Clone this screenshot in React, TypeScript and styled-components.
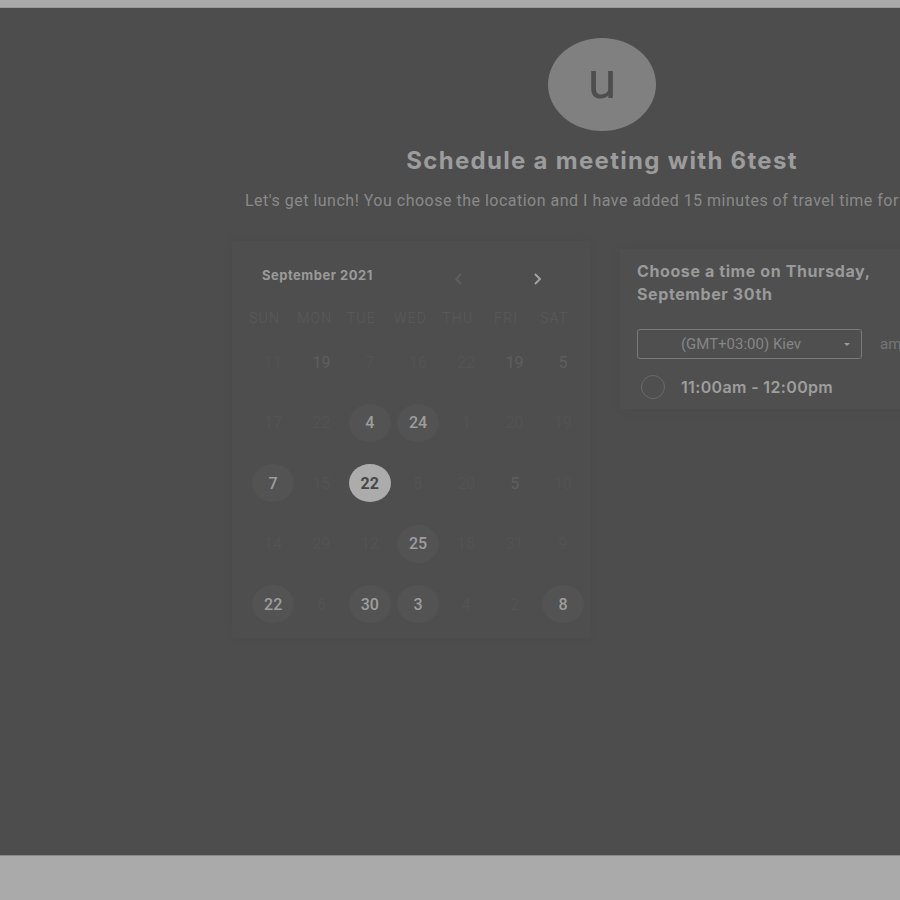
import React from "react";
import styled, { createGlobalStyle } from "styled-components";

const Global = createGlobalStyle`
  html, body { margin: 0; padding: 0; background: #aaaaaa; overflow: hidden; }
  body { font-family: Roboto, "Liberation Sans", sans-serif; }
  * { box-sizing: border-box; }
`;

const TopBand = styled.div`
  height: 8px;
  background: #aaaaaa;
  border-bottom: 1px solid #9a9a9a;
`;

const Main = styled.main`
  height: 848px;
  background: #4d4d4d;
  border-bottom: 1px solid #8a8a8a;
  overflow: hidden;
`;

const Content = styled.div`
  margin-left: 232px;
  width: 740px;
  display: flex;
  flex-direction: column;
  align-items: center;
`;

const Avatar = styled.div`
  margin-top: 30px;
  width: 108px;
  height: 93px;
  border-radius: 50%;
  background: #808080;
  display: flex;
  align-items: center;
  justify-content: center;
  color: #4e4e4e;
  font-family: Roboto, sans-serif;
  font-size: 52px;
  line-height: 1;
  padding-bottom: 8px;
`;

const Title = styled.h1`
  margin: 15px 0 0;
  font-family: Inter, "Liberation Sans", sans-serif;
  font-weight: 700;
  font-size: 24px;
  line-height: 30px;
  color: #9c9c9c;
  letter-spacing: 1.3px;
`;

const Subtitle = styled.p`
  align-self: flex-start;
  margin: 15px 0 0 13px;
  font-family: Roboto, sans-serif;
  font-size: 16px;
  line-height: 20px;
  letter-spacing: 0.5px;
  color: #8a8a8a;
  white-space: nowrap;
`;

const Cards = styled.div`
  margin-top: 30px;
  align-self: stretch;
  display: flex;
  align-items: flex-start;
  gap: 30px;
`;

const CalendarCard = styled.section`
  width: 358px;
  padding: 24px 3px 3px 17px;
  background: #4e4e4e;
  box-shadow: 0 0 12px rgba(0, 0, 0, 0.04);
`;

const CalHeader = styled.div`
  display: flex;
  align-items: center;
  height: 20px;
  padding-left: 13px;
`;

const Month = styled.div`
  font-family: Inter, "Liberation Sans", sans-serif;
  font-weight: 700;
  font-size: 13px;
  letter-spacing: 0.5px;
  color: #9a9a9a;
  flex: 1;
`;

const Nav = styled.div`
  display: flex;
  gap: 59px;
  margin-right: 40px;
  margin-top: 7px;
`;

const NavButton = styled.button<{ $active?: boolean }>`
  width: 20px;
  height: 14px;
  padding: 0;
  border: 0;
  background: none;
  display: flex;
  align-items: center;
  justify-content: center;
  color: ${(p) => (p.$active ? "#a2a2a2" : "#5e5e5e")};
`;

const Weekdays = styled.div`
  margin-top: 21px;
  display: grid;
  grid-template-columns: repeat(7, 48.3px);
  height: 24px;
  align-items: center;
`;

const Weekday = styled.div`
  text-align: center;
  padding-right: 17px;
  font-family: Roboto, sans-serif;
  font-size: 14px;
  font-weight: 300;
  letter-spacing: 1.2px;
  color: #5a5a5a;
  white-space: nowrap;
`;

const Days = styled.div`
  margin-top: 2px;
  display: grid;
  grid-template-columns: repeat(7, 48.3px);
  grid-auto-rows: 60.5px;
  align-items: center;
  justify-items: center;
`;

type Kind = "faint" | "dim" | "open" | "selected";

const Day = styled.div<{ $kind: Kind }>`
  width: 42px;
  height: 38px;
  border-radius: 50%;
  display: flex;
  align-items: center;
  justify-content: center;
  font-family: Roboto, sans-serif;
  font-size: 16px;
  font-weight: ${(p) => (p.$kind === "selected" ? 700 : p.$kind === "open" ? 500 : 400)};
  background: ${(p) =>
    p.$kind === "selected" ? "#acacac" : p.$kind === "open" ? "#535353" : "transparent"};
  color: ${(p) =>
    p.$kind === "selected"
      ? "#474747"
      : p.$kind === "open"
      ? "#9e9e9e"
      : p.$kind === "dim"
      ? "#5e5e5e"
      : "#535353"};
`;

const TimeCard = styled.section`
  flex: 1;
  margin-top: 8px;
  padding: 11px 17px 10px;
  background: #4f4f4f;
  box-shadow: 0 0 12px rgba(0, 0, 0, 0.05);
`;

const TimeTitle = styled.h2`
  margin: 0;
  font-family: Inter, "Liberation Sans", sans-serif;
  font-weight: 700;
  font-size: 16px;
  line-height: 23px;
  letter-spacing: 0.6px;
  color: #9a9a9a;
`;

const ZoneRow = styled.div`
  margin-top: 23px;
  display: flex;
  align-items: center;
  gap: 18px;
`;

const Select = styled.div`
  width: 225px;
  height: 30px;
  border: 1px solid #7a7a7a;
  border-radius: 3px;
  display: flex;
  align-items: center;
  padding: 0 11px 0 0;
`;

const SelectText = styled.span`
  flex: 1;
  text-align: center;
  font-family: Roboto, sans-serif;
  font-size: 15px;
  color: #868686;
`;

const Caret = styled.span`
  width: 0;
  height: 0;
  border-left: 3px solid transparent;
  border-right: 3px solid transparent;
  border-top: 3px solid #9a9a9a;
`;

const Toggle = styled.span`
  font-family: Roboto, sans-serif;
  font-size: 15px;
  color: #767676;
  white-space: nowrap;
`;

const Slot = styled.div`
  margin-top: 16px;
  display: flex;
  align-items: center;
  gap: 16px;
  padding-left: 4px;
`;

const Radio = styled.span`
  width: 24px;
  height: 24px;
  border-radius: 50%;
  border: 1px solid #6a6a6a;
`;

const SlotText = styled.span`
  font-family: Inter, "Liberation Sans", sans-serif;
  font-weight: 600;
  font-size: 16px;
  letter-spacing: 0.35px;
  color: #9e9e9e;
`;

const BottomBand = styled.div`
  height: 44px;
  background: #aaaaaa;
`;

const Chevron = ({ dir }: { dir: "left" | "right" }) => (
  <svg width="9" height="12" viewBox="0 0 9 12" fill="none">
    <polyline
      points={dir === "left" ? "7,1 2,6 7,11" : "2,1 7,6 2,11"}
      stroke="currentColor"
      strokeWidth="2"
    />
  </svg>
);

const weekdays = ["SUN", "MON", "TUE", "WED", "THU", "FRI", "SAT"];

const days: [string, Kind][] = [
  ["11", "faint"], ["19", "dim"], ["7", "faint"], ["16", "faint"], ["22", "faint"], ["19", "dim"], ["5", "dim"],
  ["17", "faint"], ["22", "faint"], ["4", "open"], ["24", "open"], ["1", "faint"], ["20", "faint"], ["19", "faint"],
  ["7", "open"], ["15", "faint"], ["22", "selected"], ["8", "faint"], ["20", "faint"], ["5", "dim"], ["10", "faint"],
  ["14", "faint"], ["29", "faint"], ["12", "faint"], ["25", "open"], ["18", "faint"], ["31", "faint"], ["9", "faint"],
  ["22", "open"], ["6", "faint"], ["30", "open"], ["3", "open"], ["4", "faint"], ["2", "faint"], ["8", "open"],
];

export default function App() {
  return (
    <>
      <Global />
      <TopBand />
      <Main>
        <Content>
          <Avatar>u</Avatar>
          <Title>Schedule a meeting with 6test</Title>
          <Subtitle>
            Let's get lunch! You choose the location and I have added 15 minutes of travel time for
          </Subtitle>
          <Cards>
            <CalendarCard>
              <CalHeader>
                <Month>September 2021</Month>
                <Nav>
                  <NavButton aria-label="Previous month">
                    <Chevron dir="left" />
                  </NavButton>
                  <NavButton $active aria-label="Next month">
                    <Chevron dir="right" />
                  </NavButton>
                </Nav>
              </CalHeader>
              <Weekdays>
                {weekdays.map((w) => (
                  <Weekday key={w}>{w}</Weekday>
                ))}
              </Weekdays>
              <Days>
                {days.map(([n, k], i) => (
                  <Day key={i} $kind={k}>
                    {n}
                  </Day>
                ))}
              </Days>
            </CalendarCard>
            <TimeCard>
              <TimeTitle>
                Choose a time on Thursday,
                <br />
                September 30th
              </TimeTitle>
              <ZoneRow>
                <Select>
                  <SelectText>(GMT+03:00) Kiev</SelectText>
                  <Caret />
                </Select>
                <Toggle>am/pm</Toggle>
              </ZoneRow>
              <Slot>
                <Radio />
                <SlotText>11:00am - 12:00pm</SlotText>
              </Slot>
            </TimeCard>
          </Cards>
        </Content>
      </Main>
      <BottomBand />
    </>
  );
}
